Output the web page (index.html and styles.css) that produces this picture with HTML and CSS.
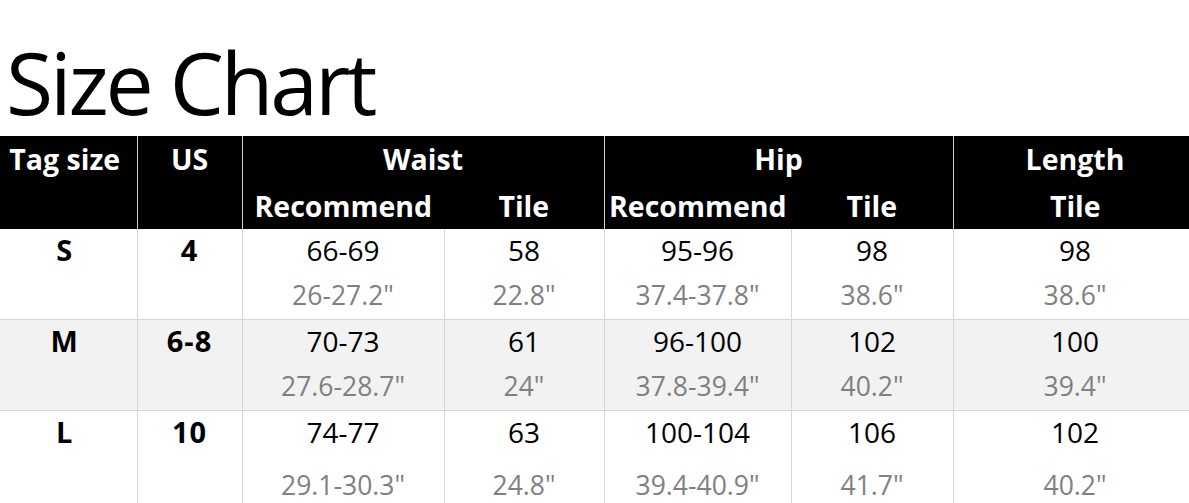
FILE: index.html
```html
<!DOCTYPE html>
<html>
<head>
<meta charset="utf-8">
<link rel="stylesheet" href="styles.css">
</head>
<body>
<h1 class="title">Size Chart</h1>
<table class="chart">
  <colgroup>
    <col class="c-tag"><col class="c-us"><col class="c-wr"><col class="c-wt"><col class="c-hr"><col class="c-ht"><col class="c-lt">
  </colgroup>
  <thead>
    <tr class="h1">
      <th rowspan="2" class="top tag">Tag size</th>
      <th rowspan="2" class="top">US</th>
      <th colspan="2">Waist</th>
      <th colspan="2">Hip</th>
      <th>Length</th>
    </tr>
    <tr class="h2">
      <th class="grp">Recommend</th>
      <th>Tile</th>
      <th class="grp">Recommend</th>
      <th>Tile</th>
      <th class="grp">Tile</th>
    </tr>
  </thead>
  <tbody>
    <tr class="row">
      <td class="tag"><div class="v b">S</div></td>
      <td><div class="v b">4</div></td>
      <td><div class="v">66-69</div><div class="s">26-27.2"</div></td>
      <td><div class="v">58</div><div class="s">22.8"</div></td>
      <td><div class="v">95-96</div><div class="s">37.4-37.8"</div></td>
      <td><div class="v">98</div><div class="s">38.6"</div></td>
      <td><div class="v">98</div><div class="s">38.6"</div></td>
    </tr>
    <tr class="row alt">
      <td class="tag"><div class="v b">M</div></td>
      <td><div class="v b">6-8</div></td>
      <td><div class="v">70-73</div><div class="s">27.6-28.7"</div></td>
      <td><div class="v">61</div><div class="s">24"</div></td>
      <td><div class="v">96-100</div><div class="s">37.8-39.4"</div></td>
      <td><div class="v">102</div><div class="s">40.2"</div></td>
      <td><div class="v">100</div><div class="s">39.4"</div></td>
    </tr>
    <tr class="row last">
      <td class="tag"><div class="v b">L</div></td>
      <td><div class="v b">10</div></td>
      <td><div class="v">74-77</div><div class="s">29.1-30.3"</div></td>
      <td><div class="v">63</div><div class="s">24.8"</div></td>
      <td><div class="v">100-104</div><div class="s">39.4-40.9"</div></td>
      <td><div class="v">106</div><div class="s">41.7"</div></td>
      <td><div class="v">102</div><div class="s">40.2"</div></td>
    </tr>
  </tbody>
</table>
</body>
</html>
```
FILE: styles.css
```css
html, body {
  margin: 0;
  padding: 0;
  background: #fff;
  overflow: hidden;
}
body {
  font-family: "Open Sans", "Noto Sans", sans-serif;
  color: #000;
}
.title {
  margin: 0;
  height: 136px;
  box-sizing: border-box;
  padding: 28px 0 0 6px;
  font-size: 86px;
  font-weight: 400;
  line-height: 108px;
  letter-spacing: -3.2px;
}
.chart {
  border-collapse: collapse;
  table-layout: fixed;
  width: 1197px;
}
.c-tag { width: 137px; }
.c-us { width: 105px; }
.c-wr { width: 202px; }
.c-wt { width: 160px; }
.c-hr { width: 187px; }
.c-ht { width: 162px; }
.c-lt { width: 244px; }
.chart th {
  background: #000;
  color: #fff;
  font-weight: 700;
  font-size: 28.5px;
  padding: 0;
  text-align: center;
  border-left: 1px solid #cfcfcf;
  border-right: 1px solid #cfcfcf;
}
.chart th:first-child { border-left: none; }
.chart .h1 th { height: 46px; }
.chart .h2 th {
  height: 47px;
  border-left: none;
  border-right: none;
}
.chart .h2 th.grp { border-left: 1px solid #cfcfcf; }
.chart th.top { vertical-align: top; line-height: 46px; }
.chart .tag { padding-right: 7px; }
.chart td {
  padding: 0;
  text-align: center;
  vertical-align: top;
  border: 1px solid #d6d6d6;
  border-top: none;
  height: 90px;
}
.chart td:first-child { border-left: none; }
.chart .row { border-bottom: 1px solid #d6d6d6; }
.chart .alt td { background: #f2f2f2; }
.v {
  font-size: 28px;
  line-height: 42px;
  color: #000;
}
.v.b {
  font-weight: 700;
  font-size: 29px;
  letter-spacing: 1px;
}
.s {
  font-size: 26.5px;
  line-height: 44px;
  margin-top: 2px;
  color: #808080;
}
.last td { height: 96px; }
.last .s { margin-top: 10px; }
```
